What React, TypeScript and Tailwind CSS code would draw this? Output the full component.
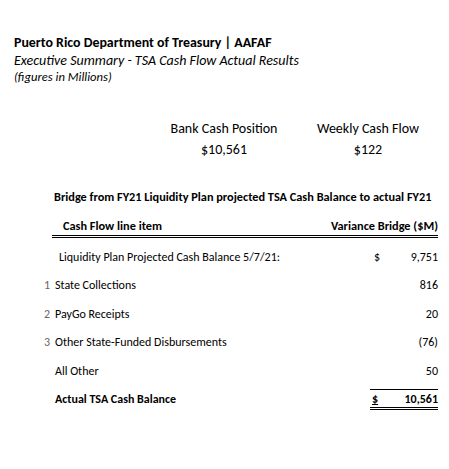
const rows = [
  { num: "1", label: "State Collections", value: "816" },
  { num: "2", label: "PayGo Receipts", value: "20" },
  { num: "3", label: "Other State-Funded Disbursements", value: "(76)" },
  { num: "", label: "All Other", value: "50" },
]

export default function App() {
  return (
    <div className="w-[449px] h-[469px] bg-white text-black font-['Carlito','Calibri','Lato',sans-serif] leading-none">
      {/* Header */}
      <div className="pl-[14px] pt-[36px]">
        <div className="font-bold text-[13.9px]">Puerto Rico Department of Treasury | AAFAF</div>
        <div className="italic text-[14px] mt-[4px]">Executive Summary - TSA Cash Flow Actual Results</div>
        <div className="italic text-[12.6px] mt-[3px]">(figures in Millions)</div>
      </div>

      {/* Summary figures */}
      <div className="flex mt-[38px] pl-[160px] text-[14px]">
        <div className="w-[128px] flex flex-col items-center gap-[7px]">
          <span>Bank Cash Position</span>
          <span>$10,561</span>
        </div>
        <div className="w-[160px] flex flex-col items-center gap-[7px]">
          <span>Weekly Cash Flow</span>
          <span>$122</span>
        </div>
      </div>

      {/* Bridge table */}
      <div className="mt-[34px] pl-[54px] font-bold text-[12.3px] whitespace-nowrap">
        Bridge from FY21 Liquidity Plan projected TSA Cash Balance to actual FY21
      </div>
      <div className="ml-[52px] w-[386px] mt-[17px] text-[12px]">
        <div className="flex justify-between font-bold text-[12.3px] pl-[11px] pb-[3px] border-b-[3px] border-double border-black">
          <span>Cash Flow line item</span>
          <span>Variance Bridge ($M)</span>
        </div>

        <div className="flex items-center h-[26.6px] mt-[6px] pl-[7px]">
          <span className="flex-1">Liquidity Plan Projected Cash Balance 5/7/21:</span>
          <span className="w-[22px]">$</span>
          <span className="w-[42px] text-right">9,751</span>
        </div>
      </div>

      <div className="ml-[44px] w-[394px] text-[12px]">
        {rows.map((row, i) => (
          <div key={i} className="flex items-center h-[28.6px]">
            <span className="w-[11px] text-[#666]">{row.num}</span>
            <span className="flex-1">{row.label}</span>
            <span className="text-right">{row.value}</span>
          </div>
        ))}
        <div className="flex items-center h-[28.6px] font-bold">
          <span className="w-[11px]"></span>
          <span className="flex-1">Actual TSA Cash Balance</span>
          <div className="w-[68px] flex justify-between pl-[2px] pt-[3px] pb-[2px] border-t border-black border-b-[3px] border-double">
            <span className="underline">$</span>
            <span>10,561</span>
          </div>
        </div>
      </div>
    </div>
  )
}
